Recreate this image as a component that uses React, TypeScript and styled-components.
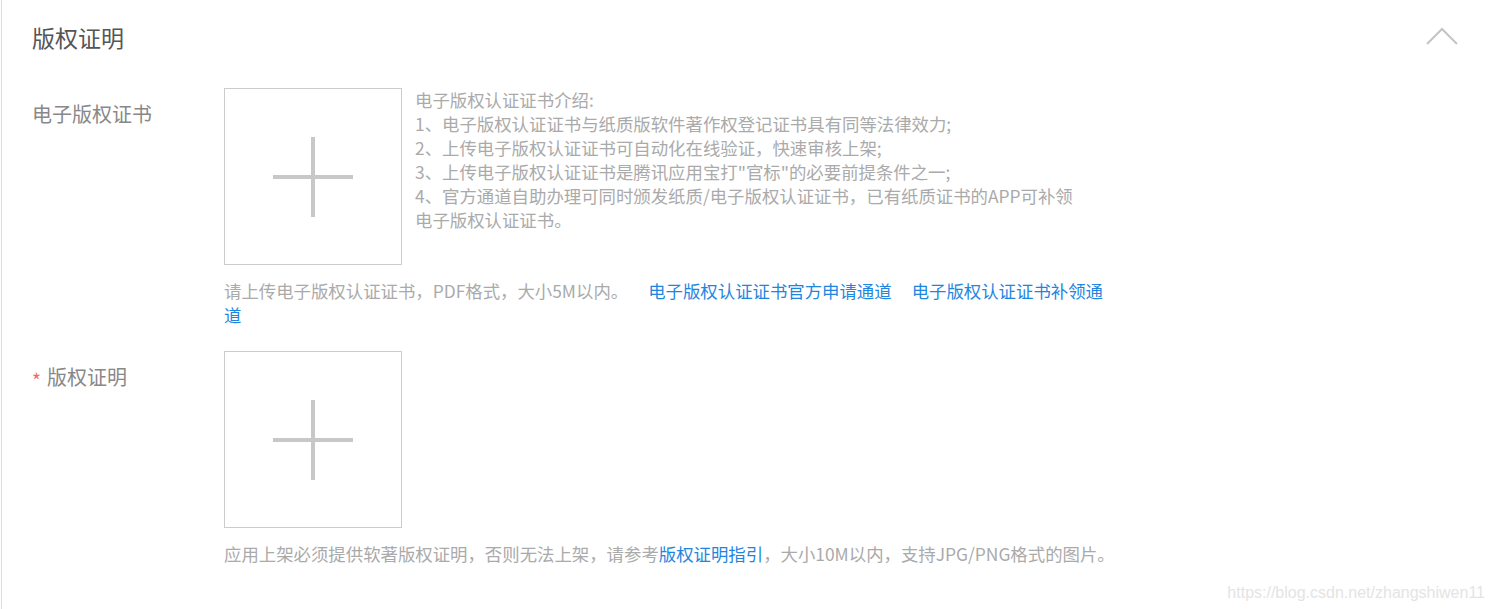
import React from 'react';
import styled, { createGlobalStyle } from 'styled-components';

const GlobalStyle = createGlobalStyle`
  html, body {
    margin: 0;
    padding: 0;
    background: #fff;
  }
  body {
    font-family: "Noto Sans CJK SC", "Noto Sans", sans-serif;
  }
`;

const Panel = styled.section`
  position: relative;
  margin-left: 1px;
  border-left: 1px solid #dddddd;
  min-height: 609px;
  box-sizing: border-box;
  padding-left: 30px;
`;

const PanelHeader = styled.header`
  display: flex;
  align-items: center;
  justify-content: space-between;
  height: 74px;
  padding-right: 33px;
`;

const PanelTitle = styled.h2`
  margin: 0;
  font-size: 23px;
  font-weight: 400;
  line-height: 1;
  color: #555;
`;

const CollapseButton = styled.button`
  border: none;
  background: transparent;
  padding: 0;
  width: 32px;
  height: 18px;
  display: flex;
  cursor: pointer;
  margin-top: -2px;
`;

const FieldList = styled.div`
  display: flex;
  flex-direction: column;
  gap: 24px;
  padding-top: 14px;
`;

const FieldRow = styled.div`
  display: grid;
  grid-template-columns: 192px 1fr;
  align-items: start;
`;

const FieldLabel = styled.div`
  padding-top: 11px;
  font-size: 20px;
  line-height: 30px;
  color: #888;
  display: flex;
  align-items: flex-start;
`;

const Required = styled.span`
  color: #f26b5b;
  font-size: 19px;
  width: 15px;
  line-height: 30px;
  padding-top: 3px;
`;

const FieldBody = styled.div`
  display: flex;
  flex-direction: column;
`;

const UploadArea = styled.div`
  display: flex;
  align-items: flex-start;
  gap: 13px;
`;

const UploadBox = styled.div`
  width: 178px;
  height: 177px;
  box-sizing: border-box;
  border: 1px solid #cccccc;
  display: flex;
  align-items: center;
  justify-content: center;
  flex-shrink: 0;
  cursor: pointer;
`;

const Intro = styled.div`
  width: 672px;
  font-size: 17.4px;
  line-height: 24px;
  color: #aaa;
`;

const Hint = styled.p<{ $width?: number }>`
  margin: 14px 0 0;
  width: ${p => (p.$width ? `${p.$width}px` : 'auto')};
  font-size: 17.4px;
  line-height: 24px;
  color: #aaa;
`;

const Link = styled.a<{ $spaced?: boolean }>`
  color: #1f86e0;
  text-decoration: none;
  margin-left: ${p => (p.$spaced ? '20px' : '0')};
`;

const Watermark = styled.span`
  position: absolute;
  right: 6px;
  bottom: 7px;
  font-family: "Liberation Sans", Arial, sans-serif;
  font-size: 16px;
  color: #e4e4e4;
`;

const PlusIcon = () => (
  <svg width="80" height="80" viewBox="0 0 80 80">
    <rect x="38" y="0" width="4" height="80" fill="#c8c8c8" />
    <rect x="0" y="38" width="80" height="4" fill="#c8c8c8" />
  </svg>
);

const ChevronUp = () => (
  <svg width="32" height="18" viewBox="0 0 32 18">
    <polyline points="1,17 16,2 31,17" fill="none" stroke="#c4c4c4" strokeWidth="2" />
  </svg>
);

const App: React.FC = () => {
  return (
    <>
      <GlobalStyle />
      <Panel>
        <PanelHeader>
          <PanelTitle>版权证明</PanelTitle>
          <CollapseButton aria-label="收起">
            <ChevronUp />
          </CollapseButton>
        </PanelHeader>

        <FieldList>
          <FieldRow>
            <FieldLabel>电子版权证书</FieldLabel>
            <FieldBody>
              <UploadArea>
                <UploadBox>
                  <PlusIcon />
                </UploadBox>
                <Intro>
                  电子版权认证证书介绍:
                  <br />
                  1、电子版权认证证书与纸质版软件著作权登记证书具有同等法律效力;
                  <br />
                  2、上传电子版权认证证书可自动化在线验证，快速审核上架;
                  <br />
                  3、上传电子版权认证证书是腾讯应用宝打"官标"的必要前提条件之一;
                  <br />
                  4、官方通道自助办理可同时颁发纸质/电子版权认证证书，已有纸质证书的APP可补领电子版权认证证书。
                </Intro>
              </UploadArea>
              <Hint $width={888}>
                请上传电子版权认证证书，PDF格式，大小5M以内。
                <Link $spaced href="#">电子版权认证证书官方申请通道</Link>
                <Link $spaced href="#">电子版权认证证书补领通道</Link>
              </Hint>
            </FieldBody>
          </FieldRow>

          <FieldRow>
            <FieldLabel>
              <Required>*</Required>
              版权证明
            </FieldLabel>
            <FieldBody>
              <UploadBox>
                <PlusIcon />
              </UploadBox>
              <Hint>
                应用上架必须提供软著版权证明，否则无法上架，请参考<Link href="#">版权证明指引</Link>，大小10M以内，支持JPG/PNG格式的图片。
              </Hint>
            </FieldBody>
          </FieldRow>
        </FieldList>

        <Watermark>https://blog.csdn.net/zhangshiwen11</Watermark>
      </Panel>
    </>
  );
};

export default App;
